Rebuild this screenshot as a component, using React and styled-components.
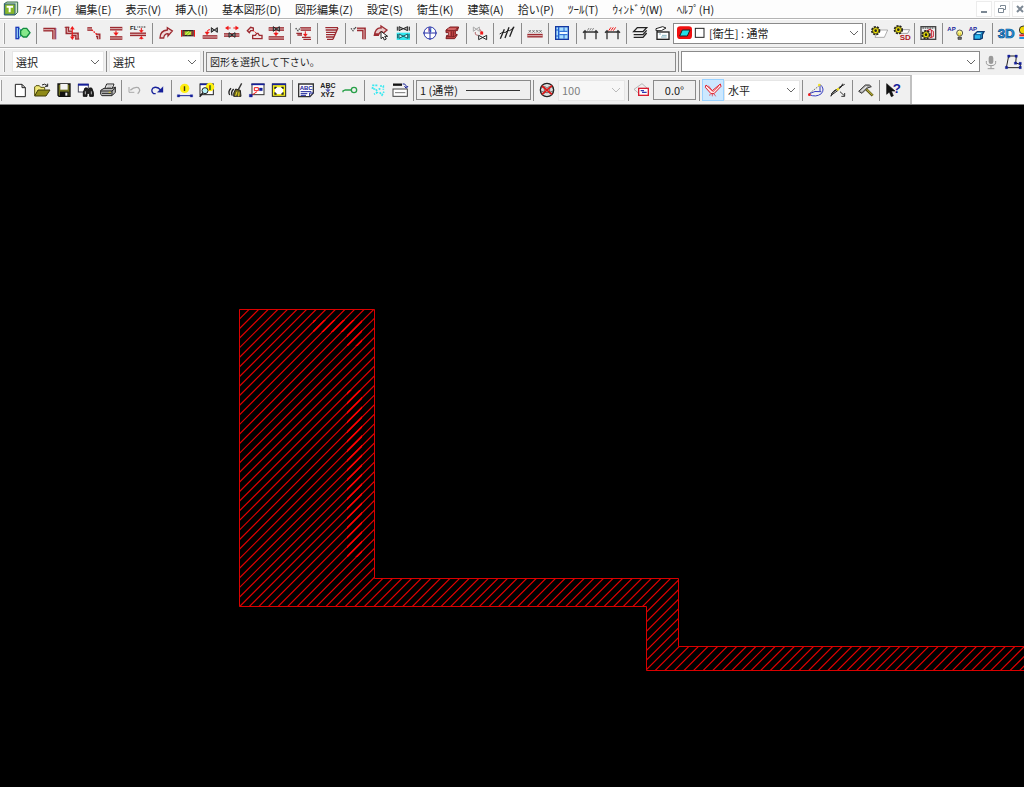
import React, { useState } from 'react'
import styled, { createGlobalStyle, css } from 'styled-components'

const Global = createGlobalStyle`
* {
    box-sizing: border-box;
}
body {
    margin: 0;
    background: #000;
    font-family: "Noto Sans CJK JP", "Liberation Sans", sans-serif;
    font-size: 11px;
    line-height: 16px;
    color: #222;
}
button, input, select {
    font: inherit;
    color: inherit;
}
`

const Page = styled.div`
    min-height: 100vh;
    display: flex;
    flex-direction: column;
    overflow: hidden;
`

const MenuBar = styled.header`
    height: 18px;
    padding: 0 0 0 3px;
    display: flex;
    align-items: center;
    background: #fdfdfd;

    nav {
        display: flex;
        gap: 14px;
        flex: 1;
        margin-left: 6px;
    }
`

const MenuItem = styled.button`
    padding: 0;
    border: 0;
    background: none;
    line-height: 14px;
    white-space: nowrap;
`

const WindowButtons = styled.div`
    display: flex;
    gap: 2px;
    margin-right: -4px;
`

const WindowButton = styled.button`
    width: 16px;
    height: 16px;
    padding: 0;
    display: flex;
    align-items: center;
    justify-content: center;
    background: #fff;
    border: 1px solid #ececec;
`

const Bar = styled.div`
    height: ${p => p.$height}px;
    display: flex;
    align-items: center;
    background: #f0f0f0;
    border-top: 1px solid #b4b4b4;
    box-shadow: inset 0 1px 0 #fff;
    overflow: hidden;
`

const BarRow = styled.div`
    background: #fff;
    display: flex;
    border-bottom: 1px solid #808080;

    ${Bar} {
        padding-right: 6px;
        border-right: 2px solid #c0c0c0;
    }
`

const Grip = styled.span`
    flex: none;
    width: 2px;
    height: 21px;
    margin: 0 ${p => p.$after}px 0 ${p => p.$before}px;
    background: #fafafa;
    border-right: 1px solid #a0a0a0;
`

const Sep = styled.span`
    flex: none;
    width: 1px;
    height: 21px;
    margin: 0 2px 0 ${p => (p.$tight ? 2 : 3)}px;
    background: #8c8c8c;
`

const Tool = styled.button`
    flex: none;
    width: 22px;
    height: 22px;
    padding: 0;
    display: flex;
    align-items: center;
    justify-content: center;
    background: none;
    border: 1px solid transparent;

    ${p => p.$active && css`
        background: #cce8ff;
        border-color: #99d1ff;
    `}
`

const Combo = styled.div`
    flex: ${p => (p.$grow ? `${p.$grow} 1 0` : `0 0 ${p.$width}px`)};
    height: 21px;
    padding-left: 3px;
    display: flex;
    align-items: center;
    gap: 2px;
    background: ${p => (p.$disabled ? '#f7f7f7' : '#fff')};
    border: 1px solid ${p => (p.$strong ? '#8a8a8a' : '#e6e6e6')};
    color: ${p => (p.$disabled ? '#808080' : '#222')};

    select {
        flex: 1;
        min-width: 0;
        height: 17px;
        padding: 0;
        margin-right: -16px;
        border: 0;
        outline: 0;
        opacity: 1;
        color: inherit;
        background: transparent;
        appearance: none;
    }
    svg {
        flex: none;
    }
    svg:last-child {
        pointer-events: none;
        margin-right: 3px;
    }
`

const Field = styled.input`
    flex: ${p => (p.$grow ? `${p.$grow} 1 0` : `0 0 ${p.$width}px`)};
    min-width: 0;
    height: 20px;
    padding: 0 3px;
    text-align: ${p => p.$align || 'left'};
    background: #efefef;
    border: 1px solid #8a8a8a;
    outline: 0;
`

const Message = styled(Field)`
    font-size: 10px;
`

const LineStyle = styled.button`
    flex: 0 0 115px;
    height: 20px;
    padding: 0 10px 0 3px;
    display: flex;
    align-items: center;
    gap: 8px;
    background: #efefef;
    border: 1px solid #8a8a8a;
    white-space: nowrap;

    i {
        flex: 1;
        height: 1px;
        background: #333;
    }
`

const Canvas = styled.main`
    flex: 1;
    display: flex;
    background: #000;

    svg {
        flex: 1;
        width: 100%;
        min-height: 600px;
    }
`

const M = '#9c2a30'
const R = '#f01818'
const K = '#222'
const B = '#16209a'

// every icon is drawn on a 60 x 54 grid, three units to the pixel
const L = ({ d, c = M, w = 3, f = 'none', ...rest }) => (
    <path d={d} stroke={c} strokeWidth={w} fill={f} {...rest} />
)
const Pipe = ({ d }) => (
    <g fill="none">
        <path d={d} stroke={M} strokeWidth="11" />
        <path d={d} stroke="#e2bcbc" strokeWidth="3" />
    </g>
)
const T = ({ x, y, s = 18, c = K, children }) => (
    <text x={x} y={y} fontSize={s} fill={c} fontWeight="700" fontFamily="Liberation Sans, sans-serif">{children}</text>
)
const Valve = ({ x, y, c = K, f = '#999' }) => (
    <path d={`M${x} ${y}v14l18 -14v14z`} stroke={c} strokeWidth="3" fill={f} />
)
const Gear = ({ x, y }) => (
    <g>
        <circle cx={x} cy={y} r="11" fill="#e8d800" stroke="#222" strokeWidth="6" strokeDasharray="6 3" />
        <circle cx={x} cy={y} r="9" fill="#f2e600" stroke="#333" strokeWidth="2" />
        <circle cx={x} cy={y} r="4" fill="#222" />
    </g>
)

const icons = {
    start: <>
        <rect x="12" y="10" width="8" height="34" fill="#8fc8f0" stroke="#1c38b8" strokeWidth="4" />
        <L d="M22 13L32 26L22 41" c="#2080c0" f="#8fe0f0" />
        <L d="M26 20L34 13H44L54 26L44 39H34L26 32Z" c="#128a40" f="#86e88a" w={4} />
    </>,
    elbow: <><Pipe d="M10 17H42V46" /><L d="M48 12V46" c="#8a5ab0" w={2} /></>,
    offset: <>
        <Pipe d="M16 8V25H30" /><Pipe d="M28 31H45V46" /><L d="M8 10H22M39 45H52" />
        <L d="M31 10V42" c={R} /><L d="M25 16L31 7L37 16ZM25 38L31 47L37 38Z" c={R} f={R} w={1} />
    </>,
    slope: <>
        <Pipe d="M10 15H24" /><Pipe d="M36 34H44V46" />
        <L d="M23 17L39 32" c={R} w={4} strokeDasharray="5 3" />
    </>,
    spacing: <>
        <Pipe d="M12 14H49" /><Pipe d="M12 42H49" />
        <L d="M30 20V32" c={R} /><L d="M23 26H37L30 35Z" c={R} f={R} w={1} />
    </>,
    level: <>
        <T x="6" y="18" s="18">FL</T><L d="M28 9H54" c={K} strokeDasharray="3 2" />
        <Pipe d="M6 31H54" />
        <L d="M40 12V24M40 38V46" c={R} /><L d="M34 19H46L40 26ZM34 44L40 37L46 44Z" c={R} f={R} w={1} />
    </>,
    curve: <L d="M12 42Q12 20 34 18V11L49 21L36 36V29Q25 29 23 42Z" f="#f0dada" w={4} />,
    fitting: <>
        <L d="M11 18V38M49 18V38" c={R} w={4} />
        <rect x="15" y="20" width="30" height="15" fill="#9ad42a" stroke="#242424" strokeWidth="4" />
        <L d="M22 31L32 22M30 34L41 23" c="#e8f060" w={3} /><L d="M18 20V35M42 20V35" c={M} w={4} />
    </>,
    insert: <>
        <Pipe d="M8 39H52" /><Valve x={34} y={11} />
        <L d="M22 28V22Q22 17 30 17" c={R} /><L d="M15 24H28L21 33Z" c={R} f={R} w={1} />
    </>,
    stretch: <>
        <L d="M12 12H26M34 12H48" c={R} /><L d="M19 6L10 12L19 18ZM41 6L50 12L41 18Z" c={R} f={R} w={1} />
        <Pipe d="M6 33H52" /><Valve x={21} y={26} />
    </>,
    bumps: <>
        <L d="M10 20L20 10L28 12V20H20L16 26ZM26 44V34H34L38 28H42L46 34H54V44Z" w={4} f="#f4e4e4" />
        <L d="M28 20L38 28" c={R} strokeDasharray="4 2" />
    </>,
    between: <>
        <Pipe d="M8 15H54" /><Pipe d="M8 42H54" />
        <Valve x={22} y={8} />
        <L d="M30 22V32" c={R} /><L d="M23 27H37L30 36Z" c={R} f={R} w={1} />
    </>,
    align: <>
        <L d="M5 13L12 20L20 10" c="#444" w={4} strokeDasharray="4 3" />
        <Pipe d="M20 15H51" />
        <L d="M7 28H24M10 33H24M24 40H50M28 46H51" w={4} />
        <L d="M34 22V34" c={R} /><L d="M28 30H40L34 38Z" c={R} f={R} w={1} />
    </>,
    stack: <L d="M13 11H51M14 18H48M15 25H46M15 32H44M15 39H40M18 46H36M51 11L36 46" w={4} />,
    rotate: <>
        <L d="M6 13L12 20L18 10L24 14" c="#444" w={4} strokeDasharray="4 3" />
        <Pipe d="M24 16H45V46" />
    </>,
    pick: <>
        <L d="M10 34Q14 10 30 12V6L48 18L34 30V24Q26 22 22 34ZM11 30H22" w={4} f="#e8caca" />
        <L d="M30 22V44L36 39L40 48L46 45L41 37H50Z" c={K} f="#fff" w={3} />
    </>,
    valves: <>
        <rect x="11" y="26" width="40" height="22" fill="#30e8f0" />
        <L d="M18 8V20L44 8V20ZM13 8V20M49 8V20" c={K} f="#aaa" w={3} />
        <L d="M18 30V43L44 30V43ZM14 30V43M48 30V43" c="#185860" f="#c8ffff" w={3} />
    </>,
    compass: <>
        <circle cx="30" cy="27" r="18" fill="#fff" stroke="#2430a8" strokeWidth="3" />
        <L d="M9 27H51M30 8V48" c="#2430a8" />
        <T x="24" y="23" s="14" c="#2430a8">N</T>
    </>,
    beam: <>
        <L d="M12 18L24 9H50L46 20H40V30L46 32L38 44H12L14 34H20V26H12Z" f="#c84848" c="#7c1c20" />
        <L d="M13 20H36L48 12M28 22V36M34 22V38M14 38H36L44 32" c="#5a1418" w={2} />
        <L d="M18 15H42M22 24V34" c="#e8a0a0" w={2} />
    </>,
    swap: <>
        <L d="M10 9V22L28 9V22Z" c="#aaa" f="#eee" w={3} />
        <L d="M30 16L35 24M16 24V30Q18 34 24 34" c={M} w={2} />
        <L d="M31 23H39V31H31Z" c={R} f={R} w={1} /><L d="M26 34V47L50 34V47Z" c={K} f="#fff" w={3} />
    </>,
    slashes: <><L d="M10 44L22 16M24 42L36 10M38 38L50 8" c={K} w={4} /><L d="M8 30Q20 22 24 26Q34 16 38 20L52 10" c={K} w={3} /></>,
    marks: <>
        <L d="M11 18L18 26M18 18L11 26M22 18L29 26M29 18L22 26M33 18L40 26M40 18L33 26M43 18L50 26M50 18L43 26" c="#555" w={2} />
        <Pipe d="M7 35H53" />
    </>,
    panel: <>
        <rect x="11" y="8" width="38" height="38" fill="#a8e0ff" stroke="#1438a0" strokeWidth="4" />
        <L d="M20 9V45" c="#1f5cd0" w={4} />
        <L d="M12 18H20M12 36H20M22 22H46M22 32H46M36 10V22M36 32V44" c="#2060d0" w={3} /><L d="M24 27H46" c="#fff" w={5} />
    </>,
    dims: <>
        <L d="M10 24H53M15 24V46M48 24V46M9 26L15 20L20 26M43 26L48 20L54 26" c="#333" w={4} />
        <L d="M22 20L27 12M29 20L34 12M36 20L41 12" c="#555" w={2} />
    </>,
    dimsRed: <>
        <L d="M10 24H53M15 24V46M48 24V46M9 26L15 20L20 26M43 26L48 20L54 26" c="#333" w={4} />
        <L d="M20 20L27 10M27 20L34 10M34 20L41 10" c={R} w={3} />
    </>,
    layers: <L d="M22 11H50L39 23H11ZM11 32H39L50 19M11 40H39L50 27M39 23V25" c={K} w={4} />,
    layerBox: <>
        <L d="M12 14L32 8L42 12L28 20L12 20ZM16 20V24" c={K} f="#fff" w={3} />
        <rect x="15" y="24" width="36" height="22" fill="#fff" stroke={K} strokeWidth="4" />
        <L d="M21 30H27M30 34H44M27 39H44" c="#4a90a0" w={2} />
    </>,
    gear: <><L d="M28 18H56L46 40H18Z" c="#888" f="#fff" w={2} /><Gear x={20} y={20} /></>,
    gearSd: <><L d="M34 17H56L50 28H28Z" c="#777" f="#fff" w={2} /><Gear x={22} y={17} /><T x="26" y="48" s="24" c="#b01818">SD</T></>,
    gearWindow: <>
        <rect x="9" y="8" width="44" height="38" fill="#eee" stroke="#444" strokeWidth="4" />
        <L d="M13 12H49" c="#666" w={4} strokeDasharray="5 2" />
        <L d="M22 22L36 16L46 22V38L34 42M32 18V38M40 18V40" c="#c82030" w={3} /><Gear x={24} y={32} />
    </>,
    apBulb: <>
        <T x="4" y="20" s="18" c={B}>AP</T>
        <circle cx="41" cy="27" r="9" fill="#fff890" stroke="#555" strokeWidth="3" />
        <L d="M38 26V36M43 26V36" c="#c8b400" w={2} /><L d="M36 39H46V46H36Z" c={K} f="#777" w={2} />
    </>,
    apCube: <>
        <T x="2" y="20" s="18" c={B}>AP</T>
        <L d="M18 32L28 23H48L43 32V42L36 46H18Z" c="#0c3870" f="#28b8f0" w={4} />
        <L d="M18 32H38L48 23M38 32V45" c="#0c3870" w={2} /><L d="M26 28H38" c="#fff" w={3} />
    </>,
    threeD: <text x="5" y="43" fontSize="40" fontWeight="700" fill="#2a9ae4" stroke="#0c4c88" strokeWidth="2" fontFamily="Liberation Sans Narrow, Liberation Sans, sans-serif">3D</text>,
    palette: <><circle cx="16" cy="18" r="12" fill="#f0d800" stroke="#333" strokeWidth="3" /><L d="M4 34H30" c="#e02020" w={6} /><L d="M4 42H30" c="#2090e0" w={6} /></>,

    mic: <><rect x="23" y="8" width="14" height="25" rx="7" fill="#999" /><L d="M16 24V28Q16 38 30 38Q44 38 44 28V24M30 38V46M20 47H40" c="#999" w={3} /></>,
    polygon: <>
        <L d="M17 9L10 44H52V34L38 30L40 9Z" c="#222" w={3} />
        <L d="M14 6H21V13H14ZM36 6H43V13H36ZM7 40H14V47H7ZM48 40H55V47H48ZM34 27H41V34H34ZM48 28H55V35H48Z" c={B} f={B} w={1} />
    </>,

    page: <L d="M16 10H36L46 20V47H16ZM36 10V20H46" c={K} f="#fff" w={3} />,
    folder: <>
        <L d="M8 44V18L12 14H22L26 19H38V26" c="#555010" f="#f0e878" w={3} />
        <L d="M8 45L18 27H54L42 45Z" c="#3c3a08" f="#8f8b18" w={3} />
        <L d="M30 12Q38 6 46 14M47 8V16H39" c={K} w={3} />
    </>,
    save: <>
        <L d="M12 9H48V46H15L12 43Z" c="#111" f="#6e7020" w={4} />
        <rect x="19" y="9" width="22" height="17" fill="#f4f4f4" /><rect x="18" y="32" width="26" height="14" fill="#111" />
        <rect x="34" y="35" width="6" height="9" fill="#eee" />
    </>,
    find: <>
        <rect x="7" y="10" width="30" height="23" fill="#fff" stroke="#445" strokeWidth="3" /><L d="M6 11H38" c={B} w={6} />
        <L d="M22 46V34L27 21H34V26H40V21H47L52 34V46H41V37H33V46Z" c="#111" f="#222" w={3} />
        <L d="M28 31V40M46 31V40" c="#fff" w={2} />
    </>,
    print: <>
        <L d="M20 24L26 9H48L42 24" c={K} f="#fff" w={3} /><L d="M28 15H42M26 20H40" c="#666" w={2} />
        <L d="M8 28L18 22H44L52 18V34L42 44H12L8 40Z" c={K} f="#bbb" w={3} />
        <L d="M9 30H42L51 22M12 37H40M42 30V43" c={K} w={3} /><L d="M32 34H38" c="#d8d030" w={3} />
    </>,
    undo: <><L d="M16 28Q28 16 40 20Q49 28 38 38" c="#aaa" w={4} /><L d="M12 18V34H28" c="#aaa" w={3} /></>,
    redo: <><L d="M42 28Q30 14 18 21Q10 30 20 38H26" c={B} w={4} /><L d="M48 17V34H31Z" c={B} f={B} w={1} /></>,
    infoLine: <>
        <circle cx="29" cy="22" r="14" fill="#ffee10" /><T x="25" y="30" s="24" c="#111">i</T>
        <L d="M12 44H48" c={B} w={3} /><L d="M7 41H14V48H7ZM46 41H53V48H46Z" c={B} f={B} w={1} />
    </>,
    infoFind: <>
        <rect x="9" y="9" width="40" height="32" fill="#fff" stroke="#222" strokeWidth="3" /><L d="M9 10H49" c={B} w={5} />
        <circle cx="39" cy="18" r="13" fill="#ffee10" /><T x="35" y="27" s="24" c="#111">i</T>
        <circle cx="24" cy="29" r="9" fill="#b8f4f8" stroke="#222" strokeWidth="3" /><L d="M17 36L8 47" c={K} w={5} />
    </>,
    broom: <>
        <L d="M50 7L40 26" c="#333" w={4} />
        <L d="M32 24L46 28L48 46L26 46Q24 36 32 24Z" c={K} f="#6a6420" w={3} /><L d="M32 44L36 32M41 46L42 34" c="#f0e020" w={3} />
        <L d="M18 22Q8 32 14 42M26 24Q16 34 22 44" c={K} w={4} />
    </>,
    target: <>
        <rect x="15" y="9" width="36" height="32" fill="#fff" stroke="#333" strokeWidth="3" /><L d="M13 10H53" c={B} w={5} />
        <L d="M22 20H34V29H22ZM30 32L12 44" c={R} w={3} />
        <L d="M37 21H46V29H37ZM7 40H16V48H7Z" c={B} f={B} w={1} />
    </>,
    fit: <>
        <rect x="10" y="9" width="40" height="37" fill="#f6f020" stroke="#222" strokeWidth="3" /><L d="M9 10H51" c={B} w={5} />
        <rect x="18" y="19" width="24" height="20" fill="#fff" />
        <L d="M18 24V19H23M37 19H42V24M42 34V39H37M23 39H18V34" c={K} w={4} />
    </>,
    abcDoc: <>
        <L d="M8 9H52V36L42 47H8Z" c="#333" f="#fff" w={4} /><T x="11" y="26" s="18" c={B}>ABC</T>
        <L d="M14 32H46M14 38H34M14 43H30M41 46V36H52" c={B} w={3} />
    </>,
    abcXyz: <><T x="7" y="20" s="21">ABC</T><L d="M30 21V31M24 25L30 32L36 25" c={B} w={3} /><T x="8" y="48" s="21">XYZ</T></>,
    link: <><L d="M9 34V30L16 27H34" c="#28a048" w={4} /><circle cx="42" cy="27" r="8" fill="#efefef" stroke="#28a048" strokeWidth="4" /></>,
    points: <><L d="M28 13H15L13 24H24L28 34L18 40M36 15H46V26M35 34L42 42L48 32M32 22L38 26" c="#38e8f0" w={5} strokeDasharray="6 3" /></>,
    cycle: <>
        <L d="M9 11H36" c="#111" w={7} /><L d="M38 9Q48 7 49 19M43 16L49 22L54 15" c={B} w={3} />
        <rect x="9" y="24" width="43" height="22" fill="#fff" stroke="#444" strokeWidth="3" /><L d="M15 35H46" c="#777" w={3} />
    </>,
    noScale: <>
        <circle cx="30" cy="27" r="20" fill="#ddd" stroke="#222" strokeWidth="4" />
        <L d="M12 22Q22 12 30 22Q38 12 48 22M12 30Q30 40 48 30M22 18V38M38 18V38" c="#333" w={2} />
        <L d="M15 15L45 40M45 14L15 40" c="#e01818" w={5} />
    </>,
    angle: <>
        <L d="M6 25L30 8L46 22M6 25L24 40" c="#999" w={2} />
        <rect x="20" y="22" width="29" height="21" fill="#fff" stroke="#d81c30" strokeWidth="4" />
        <L d="M26 29H36M30 34H44" c="#3038b0" w={4} />
    </>,
    snap: <>
        <L d="M9 12L28 29L52 9L54 16L33 38H24L7 19Z" c="#e01c28" f="#ffe8e8" w={3} />
        <L d="M16 14L30 32L47 16M28 38V46M33 38L38 46M22 38L20 44" c="#e01c28" w={2} />
    </>,
    arc: <>
        <L d="M10 41L12 36L42 12" c={K} w={2} strokeDasharray="4 3" />
        <L d="M42 10Q58 24 46 38Q30 50 10 41M42 12V30M10 38Q26 28 46 32" c="#343cc0" w={3} />
        <circle cx="10" cy="41" r="4" fill={R} /><circle cx="40" cy="12" r="4" fill="#f0e020" />
    </>,
    trim: <>
        <L d="M9 46Q14 26 30 25Q42 20 44 8M10 38L28 24M32 20L50 10M8 44L30 28" c={K} w={3} />
        <circle cx="30" cy="25" r="4" fill="#f0e020" /><L d="M36 32L50 45M50 36V46H40" c="#333" w={3} />
    </>,
    hammer: <>
        <L d="M28 22L50 44" c="#5a5418" w={8} /><L d="M29 22L50 43" c="#d8d040" w={3} />
        <L d="M8 31L28 12H40L46 17L34 21L18 37Z" c="#333" f="#aaa" w={3} /><L d="M16 30L32 16" c="#fff" w={3} />
    </>,
    help: <><L d="M11 8V40L19 33L25 47L31 44L25 30H36Z" c="#111" f="#111" w={2} /><T x="29" y="37" s="40" c={B}>?</T></>,
}

const Icon = ({ name }) => (
    <svg width="20" height="18" viewBox="0 0 60 54" aria-hidden="true">{icons[name]}</svg>
)

const Chevron = ({ color = '#666' }) => (
    <svg width="10" height="10" viewBox="0 0 10 10" aria-hidden="true">
        <path d="M1 3L5 7L9 3" fill="none" stroke={color} />
    </svg>
)

// "|" is a separator, "," a narrower one
const Tools = ({ list }) => list.split(' ').map((name, i) => {
    if (name === '|' || name === ',') {
        return <Sep key={i} $tight={name === ','} />
    }
    return <Tool key={i} type="button" aria-label={name}><Icon name={name} /></Tool>
})

const ComboBox = ({ label, value, options = [value], children, ...rest }) => {
    const [current, setCurrent] = useState(value)
    return (
        <Combo {...rest}>
            {children}
            <select aria-label={label} value={current} disabled={rest.$disabled} onChange={e => setCurrent(e.target.value)}>
                {options.map(o => <option key={o}>{o}</option>)}
            </select>
            <Chevron color={rest.$disabled ? '#bbb' : '#666'} />
        </Combo>
    )
}

const menus = ['ﾌｧｲﾙ(F)', '編集(E)', '表示(V)', '挿入(I)', '基本図形(D)', '図形編集(Z)', '設定(S)', '衛生(K)', '建築(A)', '拾い(P)', 'ﾂｰﾙ(T)', 'ｳｨﾝﾄﾞｳ(W)', 'ﾍﾙﾌﾟ(H)']

const outline = 'M2000 541.5H678.5V473.5H374.5V204.5H239.5V501.5H646.5V565.5H2000'
const hatch = Array.from({ length: 240 }, (_, i) => {
    const sum = 453.5 + (i - 1) * 9.59
    return `M${sum - 200} 200L${sum - 570} 570`
}).join('')

const Drawing = () => (
    <svg role="img" aria-label="断面図">
        <defs>
            <clipPath id="wall"><path d={outline} /></clipPath>
            <clipPath id="dense"><path d="M347 285H362V452H347ZM313 215H362V241H347V227H313Z" /></clipPath>
        </defs>
        <g clipPath="url(#wall)">
            <path d={hatch} stroke="#e00000" strokeWidth="1.2" />
            <path d={hatch} stroke="#ff0000" strokeWidth="1.6" clipPath="url(#dense)" />
        </g>
        <path d={outline} fill="none" stroke="#d80000" />
    </svg>
)

export default function App() {
    return (
        <Page>
            <Global />
            <MenuBar>
                <svg width="17" height="16" viewBox="0 0 51 48" aria-hidden="true">
                    <path d="M4 8L12 3H44V34L36 42H4Z" fill="#cfe8c0" stroke="#356a50" strokeWidth="3" />
                    <rect x="5" y="9" width="31" height="31" fill="#88b828" stroke="#306080" strokeWidth="3" />
                    <path d="M11 17H30M20 17V34" stroke="#fff" strokeWidth="6" />
                </svg>
                <nav>
                    {menus.map(m => <MenuItem key={m} type="button">{m}</MenuItem>)}
                </nav>
                <WindowButtons>
                    <WindowButton type="button" aria-label="最小化">
                        <svg width="10" height="10"><path d="M2 8H8" stroke="#7c8894" strokeWidth="2" /></svg>
                    </WindowButton>
                    <WindowButton type="button" aria-label="元に戻す">
                        <svg width="10" height="10"><path d="M3.500 3V1.500H8.500V5.500H7M1.500 4.500H6.500V8.500H1.500Z" fill="none" stroke="#7c8894" /></svg>
                    </WindowButton>
                    <WindowButton type="button" aria-label="閉じる">
                        <svg width="10" height="10"><path d="M2 2L8 8M8 2L2 8" stroke="#7c8894" strokeWidth="2" /></svg>
                    </WindowButton>
                </WindowButtons>
            </MenuBar>

            <Bar $height={29}>
                <Grip $before={3} $after={6} />
                <Tools list="start | elbow offset slope spacing level | curve fitting insert stretch bumps between | align , stack | rotate pick valves , compass beam | swap , slashes | marks , panel | dims dimsRed | layers layerBox" />
                <ComboBox $width={190} $strong label="レイヤ" value="[衛生] : 通常">
                    <svg width="30" height="16" viewBox="0 0 90 48" aria-hidden="true">
                        <rect x="0" y="4" width="45" height="38" rx="10" fill="#f01010" />
                        <path d="M16 15H39L31 33H8Z" fill="#20e0e8" stroke="#222" strokeWidth="3" />
                        <rect x="55" y="10" width="26" height="27" fill="#fff" stroke="#222" strokeWidth="3" />
                    </svg>
                </ComboBox>
                <Tools list=", gear gearSd , gearWindow | apBulb apCube | threeD palette" />
            </Bar>

            <Bar $height={28}>
                <Grip $before={3} $after={7} />
                <ComboBox $width={92} label="選択モード" value="選択" />
                <Sep $tight />
                <ComboBox $width={92} label="選択対象" value="選択" />
                <Sep $tight />
                <Message $grow={11} readOnly aria-label="メッセージ" value="図形を選択して下さい。" />
                <Sep $tight />
                <ComboBox $grow={7} $strong label="コマンド" value="" />
                <Tools list="mic polygon" />
            </Bar>

            <BarRow>
                <Bar $height={29}>
                    <Grip $before={0} $after={7} />
                    <Tools list="page folder save find print , undo redo | infoLine infoFind | broom target fit , abcDoc abcXyz link | points cycle ," />
                    <LineStyle type="button">1 (通常)<i /></LineStyle>
                    <Tools list=", noScale" />
                    <ComboBox $width={67} $disabled label="縮尺" value="100" />
                    <Tools list="| angle" />
                    <Field $width={43} $align="center" aria-label="角度" defaultValue="0.0°" />
                    <Sep />
                    <Tool type="button" aria-label="snap" $active><Icon name="snap" /></Tool>
                    <ComboBox $width={76} label="方向" value="水平" />
                    <Tools list=", arc trim | hammer , help" />
                </Bar>
            </BarRow>

            <Canvas><Drawing /></Canvas>
        </Page>
    )
}
